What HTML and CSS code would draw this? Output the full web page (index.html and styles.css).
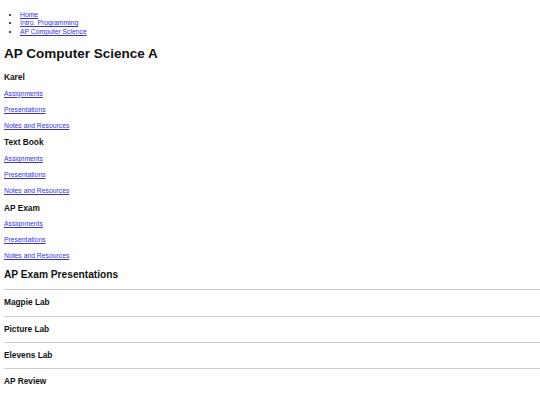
FILE: index.html
```html
<!DOCTYPE html>
<html lang="en">
<head>
    <meta charset="UTF-8">
    <meta name="viewport" content="width=device-width, initial-scale=1.0">
    <title>AP Computer Science A</title>
    <link rel="stylesheet" href="styles.css">
</head>
<body>
    <ul class="crumbs">
        <li><a href="#">Home</a></li>
        <li><a href="#">Intro. Programming</a></li>
        <li><a href="#">AP Computer Science</a></li>
    </ul>

    <h1 class="title">AP Computer Science A</h1>

    <div class="unit">
        <h3 class="unitName">Karel</h3>
        <p class="link"><a href="#">Assignments</a></p>
        <p class="link"><a href="#">Presentations</a></p>
        <p class="link"><a href="#">Notes and Resources</a></p>
    </div>
    <div class="unit">
        <h3 class="unitName">Text Book</h3>
        <p class="link"><a href="#">Assignments</a></p>
        <p class="link"><a href="#">Presentations</a></p>
        <p class="link"><a href="#">Notes and Resources</a></p>
    </div>
    <div class="unit">
        <h3 class="unitName">AP Exam</h3>
        <p class="link"><a href="#">Assignments</a></p>
        <p class="link"><a href="#">Presentations</a></p>
        <p class="link"><a href="#">Notes and Resources</a></p>
    </div>

    <h2 class="subtitle">AP Exam Presentations</h2>
    <div class="labs">
        <div class="lab">Magpie Lab</div>
        <div class="lab">Picture Lab</div>
        <div class="lab">Elevens Lab</div>
        <div class="lab">AP Review</div>
    </div>
</body>
</html>
```

FILE: styles.css
```css
body {
    margin: 0;
    padding: 4px 0 4px 4px;
    font-family: "Liberation Sans", Arial, sans-serif;
    font-size: 6.8px;
    color: #111;
    background-color: #fff;
}
a {
    color: #3535dd;
}

.crumbs {
    margin: 6.6px 0 0;
    padding-left: 16px;
}
.crumbs li {
    line-height: 8.8px;
}

.title {
    margin: 9px 0 0;
    font-size: 13.5px;
    line-height: 16px;
}

.unit {
    margin-top: 7px;
}
.unit:first-of-type {
    margin-top: 10px;
}
.unitName {
    margin: 0;
    font-size: 8.3px;
    line-height: 10px;
}
.link {
    margin: 7.2px 0 0;
    line-height: 8.8px;
}
.unitName + .link {
    margin-top: 7.6px;
}

.subtitle {
    margin: 6.8px 0 0;
    font-size: 10.2px;
    line-height: 13px;
}

.labs {
    margin-top: 8.5px;
}
.lab {
    border-top: 1px solid #cccccc;
    line-height: 25.3px;
    font-size: 8.3px;
    font-weight: bold;
}
```
